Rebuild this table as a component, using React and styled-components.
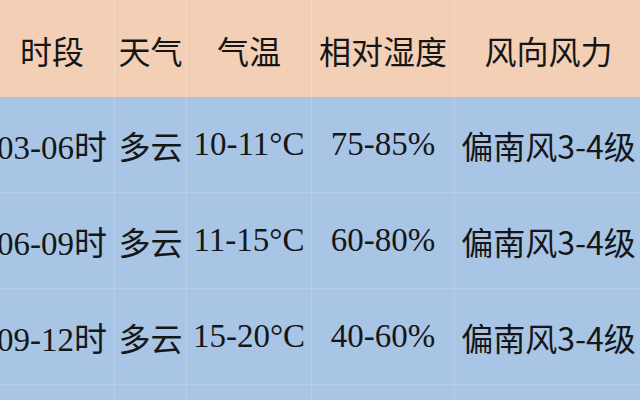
import React from "react";
import styled, { createGlobalStyle } from "styled-components";

const rows = [
  ["03-06时", "多云", "10-11°C", "75-85%", "偏南风3-4级"],
  ["06-09时", "多云", "11-15°C", "60-80%", "偏南风3-4级"],
  ["09-12时", "多云", "15-20°C", "40-60%", "偏南风3-4级"],
  ["", "", "", "", ""],
];

const headers = ["时段", "天气", "气温", "相对湿度", "风向风力"];

// font per column: serif digits in the first columns, sans in the wind column
const colFonts = ["serif", "sans", "serif", "serif", "sans"];

const App = () => {
  return (
    <>
      <GlobalStyle />
      <Page>
        <Table>
          {headers.map((h, i) => (
            <HeadCell key={h} $last={i === headers.length - 1}>
              {h}
            </HeadCell>
          ))}
          {rows.map((row, r) =>
            row.map((val, c) => (
              <BodyCell
                key={`${r}-${c}`}
                $font={colFonts[c]}
                $last={c === row.length - 1}
              >
                {val}
              </BodyCell>
            ))
          )}
        </Table>
      </Page>
    </>
  );
};

export default App;

const GlobalStyle = createGlobalStyle`
  html, body {
    margin: 0;
    padding: 0;
    width: 640px;
    height: 400px;
    overflow: hidden;
    background: #a8c5e6;
  }
`;

const Page = styled.div`
  width: 640px;
  height: 400px;
  overflow: hidden;
`;

const Table = styled.div`
  display: grid;
  grid-template-columns: 125px 72px 125px 143px 187px;
  grid-template-rows: 97px repeat(4, 96px);
  margin-left: -10px;
  width: 652px;
`;

const Cell = styled.div`
  display: flex;
  align-items: center;
  justify-content: center;
  white-space: nowrap;
  color: #161616;
  box-sizing: border-box;
`;

const HeadCell = styled(Cell)`
  background: #f3cfb5;
  border-right: ${(p) => (p.$last ? "none" : "1px solid #f6dac6")};
  font-family: "Noto Sans CJK SC", "Noto Sans", sans-serif;
  font-size: 32px;
  padding-top: 2px;
`;

const BodyCell = styled(Cell)`
  background: #a8c5e6;
  border-right: ${(p) => (p.$last ? "none" : "1px solid #b4cdec")};
  border-bottom: 1px solid #b4cdec;
  font-family: ${(p) =>
    p.$font === "serif"
      ? '"Liberation Serif", "Noto Sans CJK SC", serif'
      : '"Noto Sans CJK SC", "Noto Sans", sans-serif'};
  font-size: ${(p) => (p.$font === "serif" ? "33px" : "32px")};
`;
